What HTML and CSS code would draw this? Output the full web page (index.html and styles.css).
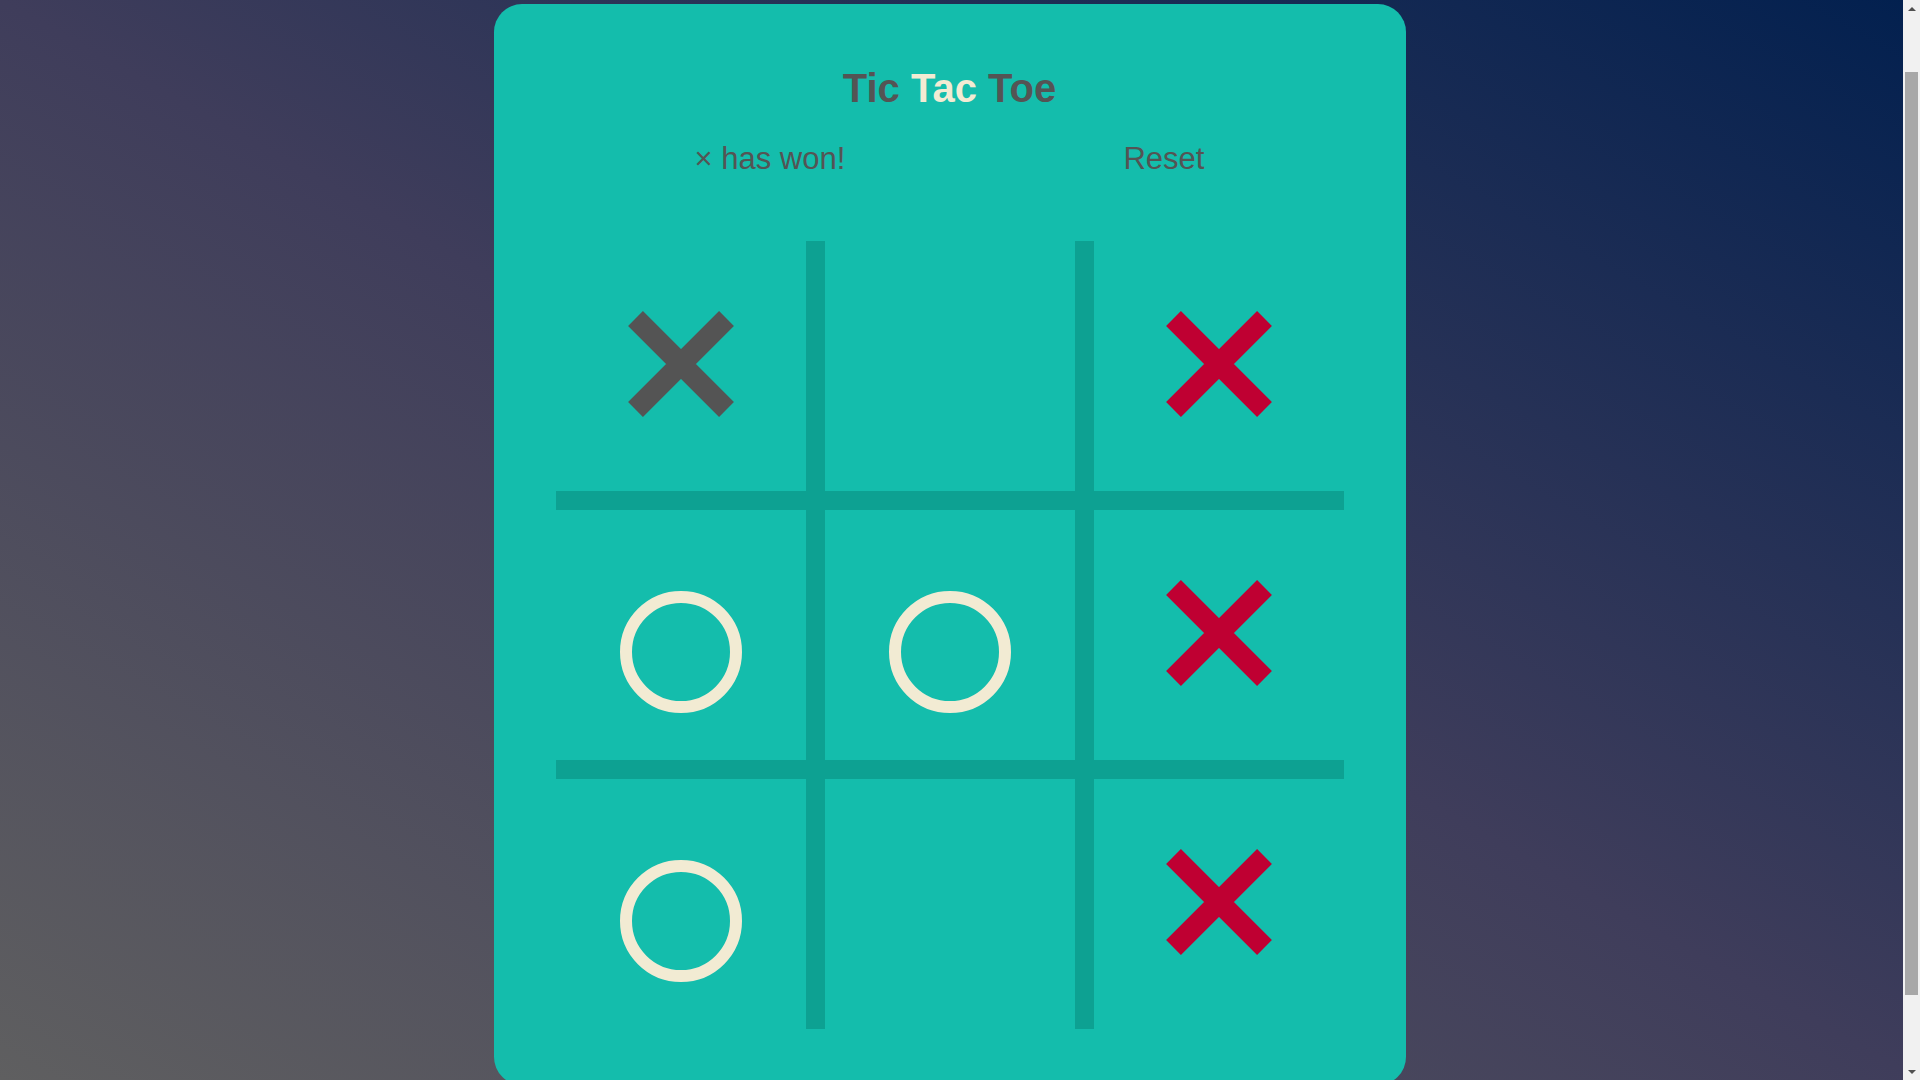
FILE: index.html
```html
<!DOCTYPE html>
<html lang="en">
<head>
<meta charset="utf-8">
<title>Tic Tac Toe</title>
<link rel="stylesheet" href="styles.css">
</head>
<body>
<div class="screen">
  <div class="stage">
    <main class="card">
      <h1 class="title"><span class="t-dark">Tic</span> <span class="t-light">Tac</span> <span class="t-dark">Toe</span></h1>
      <div class="status">
        <span class="winner">× has won!</span>
        <button class="reset" type="button">Reset</button>
      </div>
      <div class="board">
        <div class="cell"><svg class="mark-x x-dark" viewBox="0 0 106 106" width="106" height="106"><path d="M7.5 7.5L98.5 98.5M98.5 7.5L7.5 98.5"/></svg></div>
        <div class="cell"></div>
        <div class="cell"><svg class="mark-x x-red" viewBox="0 0 106 106" width="106" height="106"><path d="M7.5 7.5L98.5 98.5M98.5 7.5L7.5 98.5"/></svg></div>
        <div class="cell"><div class="mark-o"></div></div>
        <div class="cell"><div class="mark-o"></div></div>
        <div class="cell"><svg class="mark-x x-red" viewBox="0 0 106 106" width="106" height="106"><path d="M7.5 7.5L98.5 98.5M98.5 7.5L7.5 98.5"/></svg></div>
        <div class="cell"><div class="mark-o"></div></div>
        <div class="cell"></div>
        <div class="cell"><svg class="mark-x x-red" viewBox="0 0 106 106" width="106" height="106"><path d="M7.5 7.5L98.5 98.5M98.5 7.5L7.5 98.5"/></svg></div>
      </div>
    </main>
  </div>
  <div class="scrollbar" aria-hidden="true">
    <div class="sb-btn sb-up"><span class="arrow-up"></span></div>
    <div class="sb-track"><div class="sb-thumb"></div></div>
    <div class="sb-btn sb-down"><span class="arrow-down"></span></div>
  </div>
</div>
</body>
</html>
```

FILE: styles.css
```css
html, body {
  margin: 0;
  padding: 0;
  height: 100%;
  overflow: hidden;
}

body {
  font-family: "Liberation Sans", Arial, sans-serif;
  background: linear-gradient(to top right, #5f5f60 0%, #3f3d5b 50%, #02204f 100%);
}

.screen {
  display: flex;
  height: 100vh;
  overflow: hidden;
}

.stage {
  flex: 1;
  display: flex;
  justify-content: center;
  align-items: flex-start;
  padding: 4px 4px 0 0;
  overflow: hidden;
}

.card {
  flex: none;
  background: #14bdac;
  border-radius: 28px;
  padding: 64px 62px 56px;
  width: 788px;
  display: flex;
  flex-direction: column;
  align-items: center;
}

.title {
  margin: 0;
  font-size: 40px;
  line-height: 1;
  font-weight: bold;
  text-align: center;
}

.t-dark {
  color: #545454;
}

.t-light {
  color: #f2ebd3;
}

.status {
  margin-top: 35px;
  width: 100%;
  display: flex;
  justify-content: space-around;
  font-size: 31px;
  line-height: 1;
  color: #545454;
}

.winner {
  display: block;
}

.reset {
  background: none;
  border: 0;
  padding: 0;
  margin: 0;
  font: inherit;
  color: inherit;
  line-height: 1;
  cursor: pointer;
}

.board {
  margin-top: 67px;
  display: grid;
  grid-template-columns: repeat(3, 250px);
  grid-auto-rows: 250px;
  gap: 19px;
  background: #0da192;
}

.cell {
  background: #14bdac;
  display: flex;
  align-items: center;
  justify-content: center;
}

.mark-x {
  display: block;
  margin-bottom: 4px;
}

.mark-x path {
  fill: none;
  stroke: currentColor;
  stroke-width: 21;
  stroke-linecap: butt;
}

.x-dark {
  color: #545454;
}

.x-red {
  color: #bf0032;
}

.mark-o {
  box-sizing: border-box;
  width: 122px;
  height: 122px;
  border: 12px solid #f2ebd3;
  border-radius: 50%;
  margin-top: 33px;
}

/* scrollbar column */
.scrollbar {
  flex: none;
  width: 17px;
  height: 100%;
  background: #f1f1f1;
  display: flex;
  flex-direction: column;
}

.sb-btn {
  flex: none;
  height: 17px;
  display: flex;
  align-items: center;
  justify-content: center;
}

.arrow-up {
  width: 0;
  height: 0;
  border-left: 4px solid transparent;
  border-right: 4px solid transparent;
  border-bottom: 4px solid #505050;
}

.arrow-down {
  width: 0;
  height: 0;
  border-left: 4px solid transparent;
  border-right: 4px solid transparent;
  border-top: 4px solid #505050;
}

.sb-track {
  flex: 1;
  padding: 55px 2px 0;
}

.sb-thumb {
  height: 923px;
  background: #a8a8a8;
}
```
